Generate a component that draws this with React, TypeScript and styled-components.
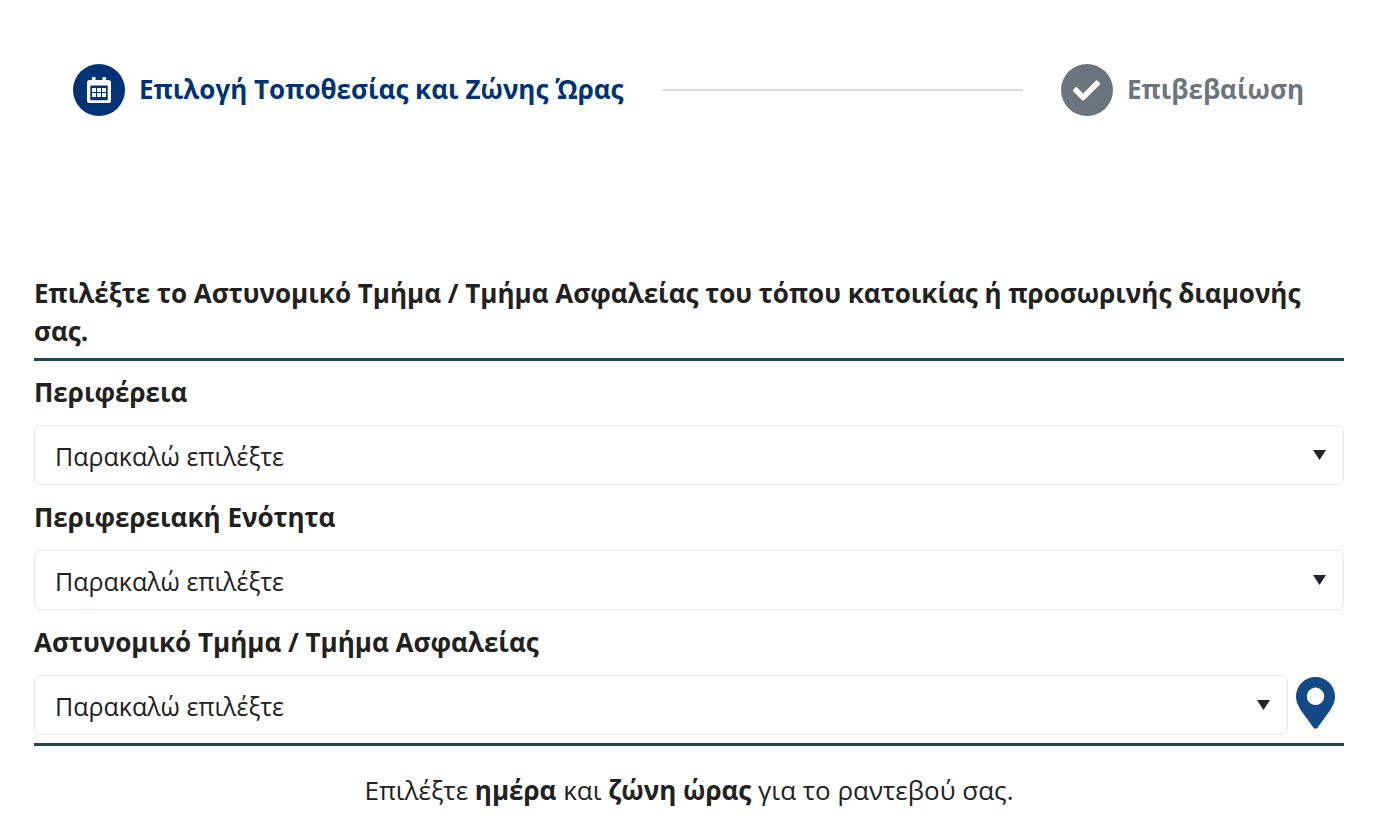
import React from "react";
import styled, { createGlobalStyle } from "styled-components";
import { FaCheck } from "react-icons/fa";

const GlobalStyle = createGlobalStyle`
  *, *::before, *::after { box-sizing: border-box; }
  body {
    margin: 0;
    background: #fff;
    color: #212121;
    font-family: "Open Sans", "Noto Sans", sans-serif;
    font-size: 26px;
    line-height: 38px;
  }
`;

const Page = styled.main`
  padding: 64px 39px 0 34px;
`;

const Stepper = styled.ol`
  display: flex;
  align-items: center;
  list-style: none;
  margin: 0 0 158px;
  padding: 0 40px 0 39px;
`;

const Step = styled.li<{ $active?: boolean }>`
  display: flex;
  align-items: center;
  gap: 14px;
  font-weight: 700;
  white-space: nowrap;
  color: ${(p) => (p.$active ? "#003375" : "#6c757d")};
`;

const StepText = styled.span`
  padding-bottom: 2px;
`;

const StepBadge = styled.span<{ $active?: boolean }>`
  display: flex;
  align-items: center;
  justify-content: center;
  width: 52px;
  height: 52px;
  border-radius: 50%;
  color: #fff;
  background: ${(p) => (p.$active ? "#003375" : "#6c757d")};
`;

const StepLine = styled.li`
  flex: 1;
  height: 2px;
  margin: 0 38px;
  background: #dfdfdf;
`;

const Title = styled.h1`
  margin: 0;
  padding-bottom: 8px;
  border-bottom: 3px solid #264653;
  font-size: 26px;
  line-height: 38px;
  font-weight: 700;
`;

const Form = styled.form`
  padding: 12px 0 8px;
  border-bottom: 3px solid #264653;
`;

const Field = styled.div`
  & + & { margin-top: 13px; }
`;

const Label = styled.label`
  display: block;
  margin-bottom: 14px;
  font-weight: 700;
`;

const ControlRow = styled.div`
  display: flex;
  align-items: flex-start;
`;

const SelectBox = styled.div`
  position: relative;
  flex: 1;
`;

const Select = styled.select`
  display: block;
  appearance: none;
  width: 100%;
  height: 60px;
  padding: 2px 48px 0 20px;
  border: 1px solid #e5e5e9;
  border-radius: 6px;
  background: #fff;
  color: #212121;
  font: inherit;
  font-size: 25px;
`;

const Arrow = styled.svg`
  position: absolute;
  top: 25px;
  right: 18px;
  pointer-events: none;
`;

const MapButton = styled.button`
  display: flex;
  margin: 2px 9px 0 8px;
  padding: 0;
  border: 0;
  background: none;
  color: #134a86;
`;

const Hint = styled.p`
  margin: 25px 0 0;
  text-align: center;
`;

const CalendarIcon = () => (
  <svg width="26" height="26" viewBox="0 0 26 26" aria-hidden="true">
    <path
      fill="#fff"
      fillRule="evenodd"
      d="M6 0h3.500v3h7V0H20v3h2.500A2.500 2.500 0 0 1 25 5.500v18.200a2.500 2.500 0 0 1-2.500 2.500h-19A2.500 2.500 0 0 1 1 23.700V5.500A2.500 2.500 0 0 1 3.500 3H6zM4.300 8.600v14.600h17.400V8.600z"
    />
    <path fill="#fff" d="M6 11h4v4H6zM11 11h4v4h-4zM16 11h4v4h-4zM6 16h4v4H6zM11 16h4v4h-4zM16 16h4v4h-4z" />
  </svg>
);

const PinIcon = () => (
  <svg width="39" height="52" viewBox="0 0 39 52" aria-hidden="true">
    <path
      fill="currentColor"
      fillRule="evenodd"
      d="M19.500 0A19.500 19.500 0 0 1 39 19.500c0 5-2.200 9.500-5 14L21.300 51q-1.800 1.600-3.600 0L5 33.500c-2.800-4.500-5-9-5-14A19.500 19.500 0 0 1 19.500 0zm0 10.600a8.700 8.700 0 1 0 0 17.400a8.700 8.700 0 1 0 0-17.400z"
    />
  </svg>
);

const fields = [
  { id: "region", label: "Περιφέρεια" },
  { id: "unit", label: "Περιφερειακή Ενότητα" },
  { id: "station", label: "Αστυνομικό Τμήμα / Τμήμα Ασφαλείας", map: true },
];

export default function App() {
  return (
    <Page>
      <GlobalStyle />
      <Stepper>
        <Step $active aria-current="step">
          <StepBadge $active><CalendarIcon /></StepBadge>
          <StepText>Επιλογή Τοποθεσίας και Ζώνης Ώρας</StepText>
        </Step>
        <StepLine aria-hidden="true" />
        <Step>
          <StepBadge><FaCheck size={27} /></StepBadge>
          <StepText>Επιβεβαίωση</StepText>
        </Step>
      </Stepper>
      <Title>
        Επιλέξτε το Αστυνομικό Τμήμα / Τμήμα Ασφαλείας του τόπου κατοικίας ή προσωρινής διαμονής σας.
      </Title>
      <Form>
        {fields.map((f) => (
          <Field key={f.id}>
            <Label htmlFor={f.id}>{f.label}</Label>
            <ControlRow>
              <SelectBox>
                <Select id={f.id} name={f.id}>
                  <option>Παρακαλώ επιλέξτε</option>
                </Select>
                <Arrow width="13" height="10" viewBox="0 0 13 10" aria-hidden="true">
                  <path fill="#212529" d="M0 0h13L6.500 10z" />
                </Arrow>
              </SelectBox>
              {f.map && (
                <MapButton type="button" aria-label="Χάρτης">
                  <PinIcon />
                </MapButton>
              )}
            </ControlRow>
          </Field>
        ))}
      </Form>
      <Hint>
        Επιλέξτε <b>ημέρα</b> και <b>ζώνη ώρας</b> για το ραντεβού σας.
      </Hint>
    </Page>
  );
}
